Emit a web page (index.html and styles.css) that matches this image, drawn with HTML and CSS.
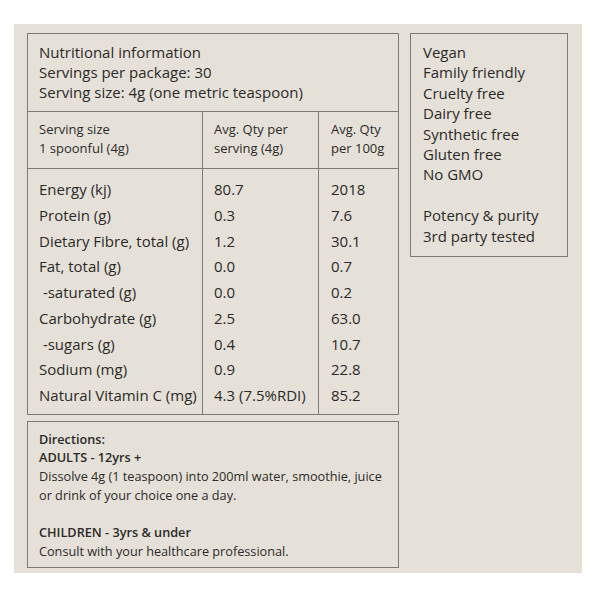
FILE: index.html
```html
<!DOCTYPE html>
<html lang="en">
<head>
<meta charset="utf-8">
<title>Nutritional information</title>
<link rel="stylesheet" href="styles.css">
</head>
<body>
<div class="panel">
  <div class="left">
    <div class="nutri">
      <div class="nutri-head">
        <div>Nutritional information</div>
        <div>Servings per package: 30</div>
        <div>Serving size: 4g (one metric teaspoon)</div>
      </div>
      <div class="grid colhead">
        <div class="cell c1">Serving size<br>1 spoonful (4g)</div>
        <div class="cell c2">Avg. Qty per<br>serving (4g)</div>
        <div class="cell c3">Avg. Qty<br>per 100g</div>
      </div>
      <div class="grid data">
        <div class="cell c1">
          <div>Energy (kj)</div>
          <div>Protein (g)</div>
          <div>Dietary Fibre, total (g)</div>
          <div>Fat, total (g)</div>
          <div>&nbsp;-saturated (g)</div>
          <div>Carbohydrate (g)</div>
          <div>&nbsp;-sugars (g)</div>
          <div>Sodium (mg)</div>
          <div>Natural Vitamin C (mg)</div>
        </div>
        <div class="cell c2">
          <div>80.7</div>
          <div>0.3</div>
          <div>1.2</div>
          <div>0.0</div>
          <div>0.0</div>
          <div>2.5</div>
          <div>0.4</div>
          <div>0.9</div>
          <div>4.3 (7.5%RDI)</div>
        </div>
        <div class="cell c3">
          <div>2018</div>
          <div>7.6</div>
          <div>30.1</div>
          <div>0.7</div>
          <div>0.2</div>
          <div>63.0</div>
          <div>10.7</div>
          <div>22.8</div>
          <div>85.2</div>
        </div>
      </div>
    </div>
    <div class="directions">
      <div class="b">Directions:</div>
      <div class="b">ADULTS - 12yrs +</div>
      <div>Dissolve 4g (1 teaspoon) into 200ml water, smoothie, juice</div>
      <div>or drink of your choice one a day.</div>
      <div>&nbsp;</div>
      <div class="b">CHILDREN - 3yrs &amp; under</div>
      <div>Consult with your healthcare professional.</div>
    </div>
  </div>
  <div class="features">
    <div>Vegan</div>
    <div>Family friendly</div>
    <div>Cruelty free</div>
    <div>Dairy free</div>
    <div>Synthetic free</div>
    <div>Gluten free</div>
    <div>No GMO</div>
    <div>&nbsp;</div>
    <div>Potency &amp; purity</div>
    <div>3rd party tested</div>
  </div>
</div>
</body>
</html>
```
FILE: styles.css
```css
html, body {
  margin: 0;
  padding: 0;
  background: #ffffff;
}
body {
  font-family: "Open Sans", "Liberation Sans", sans-serif;
  color: #2b2a28;
}
.panel {
  margin: 24px 0 0 14px;
  width: 568px;
  height: 549px;
  box-sizing: border-box;
  background: #e6e1d8;
  padding: 9px 0 0 13px;
  display: flex;
  align-items: flex-start;
  gap: 11px;
}
.left {
  width: 372px;
  display: flex;
  flex-direction: column;
  gap: 6px;
}
.nutri {
  border: 1px solid #7d7973;
  font-size: 15px;
}
.nutri-head {
  padding: 8px 11px 9px;
  line-height: 20px;
  border-bottom: 1px solid #7d7973;
}
.grid {
  display: grid;
  grid-template-columns: 174px 116px 1fr;
}
.colhead {
  font-size: 13px;
  line-height: 18.5px;
  border-bottom: 1px solid #7d7973;
}
.colhead .cell {
  padding: 8px 0 11px 11px;
}
.data {
  line-height: 25.75px;
}
.data .cell {
  padding: 8px 0 5px 11px;
}
.c2, .c3 {
  border-left: 1px solid #7d7973;
}
.c3 {
  padding-left: 12px !important;
}
.directions {
  border: 1px solid #7d7973;
  font-size: 12.7px;
  line-height: 18.7px;
  padding: 8px 11px 6px;
}
.b {
  font-weight: 600;
}
.features {
  width: 158px;
  box-sizing: border-box;
  border: 1px solid #7d7973;
  font-size: 15px;
  line-height: 20.4px;
  padding: 8px 12px 10px;
}
```
